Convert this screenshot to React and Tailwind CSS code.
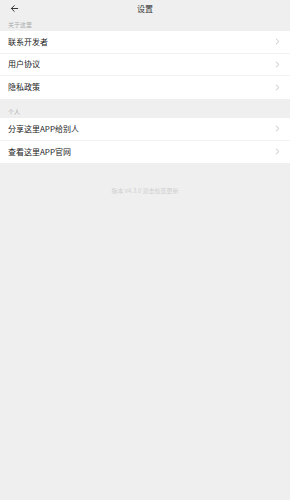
import React from "react";

const Row = ({ text, last }) => (
  <div className={`flex items-center h-[22.5px] pl-[8px] pr-[10px] ${last ? "" : "border-b border-[#f2f2f2]"}`}>
    <span className="flex-1 text-[8px] text-[#222]">{text}</span>
    <svg width="5" height="7" viewBox="0 0 5 7" fill="none">
      <path d="M1 0.8 L4 3.5 L1 6.2" stroke="#bbb" strokeWidth="0.8" />
    </svg>
  </div>
);

export default function App() {
  return (
    <div className="w-[290px] h-[500px] bg-[#efefef] flex flex-col" style={{ fontFamily: '"Noto Sans CJK SC", "Noto Sans", sans-serif' }}>
      <div className="relative h-[18px] flex items-center justify-center">
        <svg className="absolute left-[10px] top-[4px]" width="9" height="9" viewBox="0 0 10 10" fill="none">
          <path d="M9 5 H1.5 M5 1.5 L1.5 5 L5 8.5" stroke="#333" strokeWidth="1.1" />
        </svg>
        <span className="text-[8px] text-[#333]">设置</span>
      </div>
      <div className="h-[13px] flex items-center pl-[8px] text-[6px] text-[#aaa]">关于这里</div>
      <div className="bg-white">
        <Row text="联系开发者" />
        <Row text="用户协议" />
        <Row text="隐私政策" last />
      </div>
      <div className="h-[19.5px] flex items-end pb-[2px] pl-[8px] text-[6px] text-[#aaa]">个人</div>
      <div className="bg-white">
        <Row text="分享这里APP给别人" />
        <Row text="查看这里APP官网" last />
      </div>
      <div className="mt-[23px] text-center text-[6px] text-[#d0d0d0]">版本 v4.3.0 双击检查更新</div>
    </div>
  );
}
